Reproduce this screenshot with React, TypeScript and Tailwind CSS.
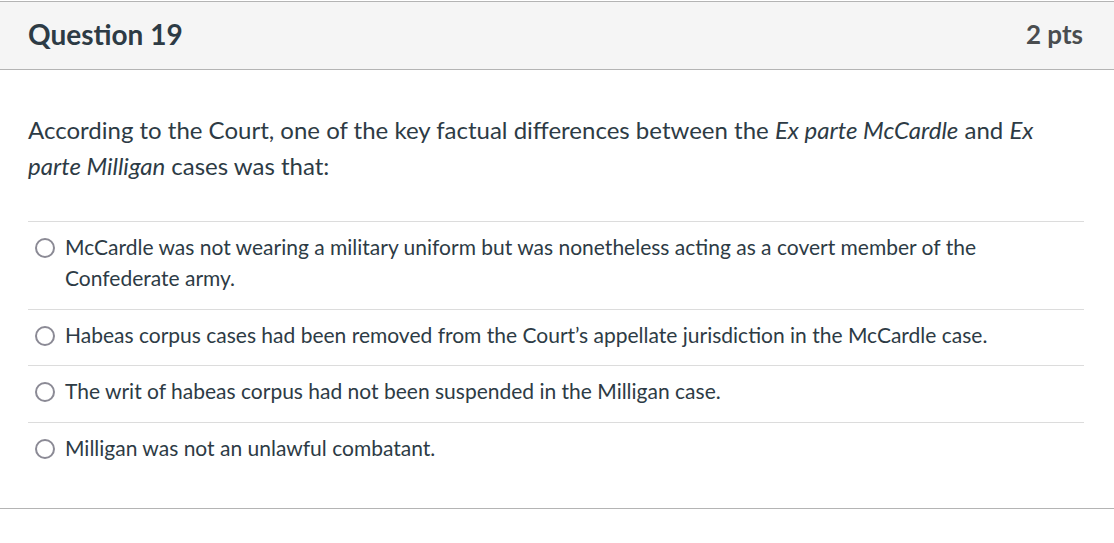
import React from "react";

const answers = [
  "McCardle was not wearing a military uniform but was nonetheless acting as a covert member of the Confederate army.",
  "Habeas corpus cases had been removed from the Court\u2019s appellate jurisdiction in the McCardle case.",
  "The writ of habeas corpus had not been suspended in the Milligan case.",
  "Milligan was not an unlawful combatant.",
];

export default function App() {
  return (
    <div className="w-[1114px] h-[543px] bg-white pt-px" style={{ fontFamily: "Lato, 'Open Sans', sans-serif" }}>
      <div className="border-t border-b border-[#b4b4b4]">
        <div className="h-[68px] bg-[#f5f5f5] border-b border-[#b4b4b4] flex items-center justify-between pl-[28px] pr-[31px] pb-[2px]">
          <div className="text-[28px] font-bold text-[#2d3b45] pb-[1px]">Question 19</div>
          <div className="text-[26px] font-bold text-[#4a4d4f]">2 pts</div>
        </div>
        <div className="px-[28px] pt-[42px] pb-[30px]">
          <p className="text-[24px] leading-[36px] text-[#2d3b45] pr-[40px]">
            According to the Court, one of the key factual differences between the <em>Ex parte McCardle</em> and <em>Ex parte Milligan</em> cases was that:
          </p>
          <div className="mt-[37px] mr-[2px]">
            {answers.map((a, i) => (
              <div key={i} className="border-t border-[#dcdcdc] pt-[9px] pb-[15.5px] flex items-start">
                <div className="w-[37px] flex-none flex justify-start pl-[7px] pt-[7px]">
                  <div className="w-[20px] h-[20px] rounded-full border-[2.5px] border-[#8b8a95] bg-white" />
                </div>
                <div className="text-[21px] leading-[31px] text-[#2d3b45] pr-[90px]">{a}</div>
              </div>
            ))}
          </div>
        </div>
      </div>
    </div>
  );
}
